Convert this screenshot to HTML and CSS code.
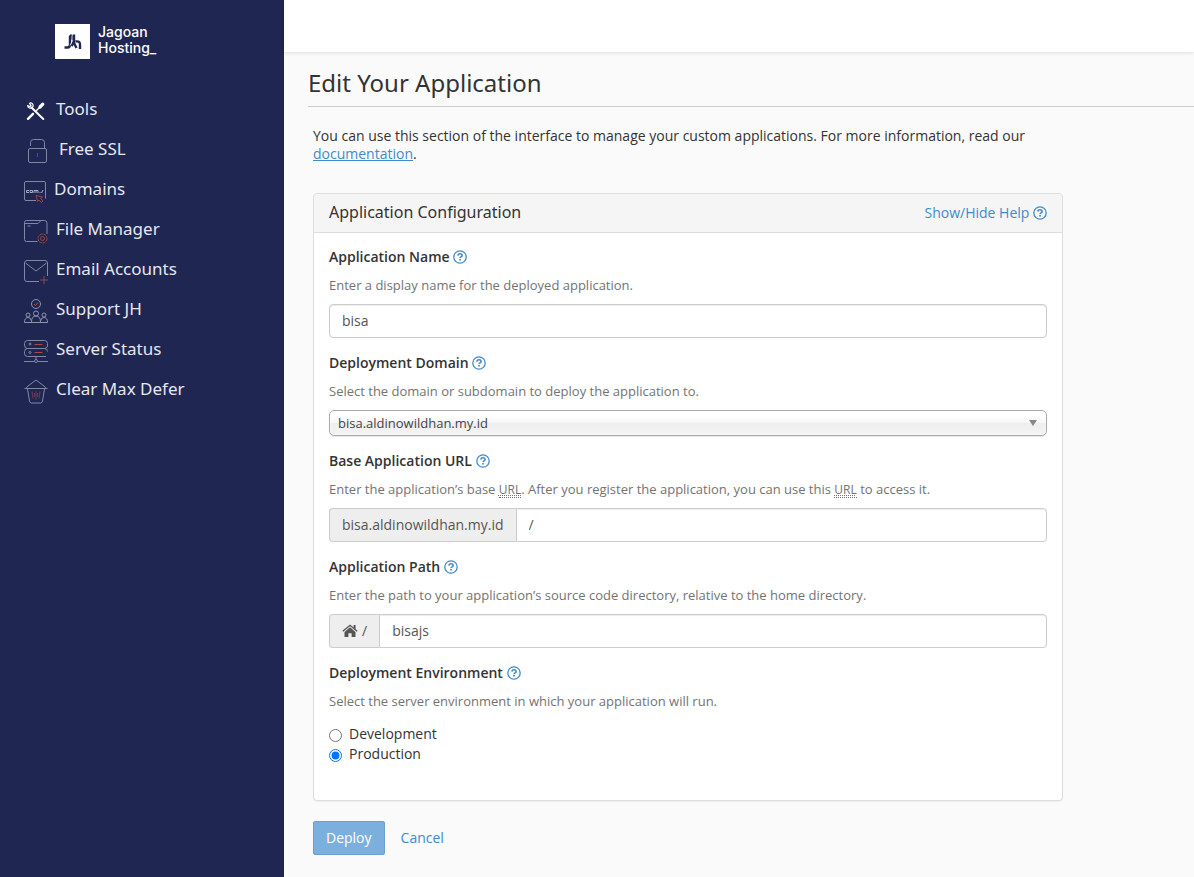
FILE: index.html
```html
<!DOCTYPE html>
<html lang="en">
<head>
    <meta charset="UTF-8">
    <meta name="viewport" content="width=device-width, initial-scale=1.0">
    <title>Edit Your Application</title>
    <link rel="stylesheet" href="styles.css">
</head>
<body>
    <svg class="sprite" aria-hidden="true">
        <symbol id="help" viewBox="0 0 14 14">
            <circle cx="7" cy="7" r="6.200" fill="none" stroke="currentColor" stroke-width="1.300"/>
            <path d="M4.900 5.600C5 4.300 5.900 3.700 7 3.700c1.200 0 2.100.7 2.100 1.700 0 1.500-2 1.500-2 2.700" fill="none" stroke="currentColor" stroke-width="1.600"/>
            <rect x="6.200" y="8.900" width="1.700" height="1.600" fill="currentColor"/>
        </symbol>
    </svg>

    <div class="sidebar">
        <a href="#" class="logo">
            <svg width="35" height="35" viewBox="0 0 35 35">
                <rect width="35" height="35" fill="#fff"/>
                <g fill="none" stroke="#202652" stroke-width="2.400">
                    <path d="M15 12v8.500q0 3-2.500 3H9.500"/>
                    <path d="M19 10.500V18l-2.500 4"/>
                    <path d="M18 17l3.500 7"/>
                    <path d="M20.500 17.500q4.500-.8 4.500 3V25"/>
                </g>
                <path d="M13.800 12l2.200-2 2 2 2-1.500v4l-2 2.500-2-2z" fill="#202652"/>
                <path d="M17 11.500v6l-2 4" fill="none" stroke="#fff" stroke-width=".8"/>
            </svg>
            <span>Jagoan<br>Hosting_</span>
        </a>
        <nav class="menu">
            <a href="#">
                <svg width="24" height="24" viewBox="0 0 24 24">
                    <g fill="none" stroke="#fff" stroke-linecap="round">
                        <path d="M7.500 8.500L19.300 20" stroke-width="2"/>
                        <path d="M4 19.800l5-5" stroke-width="2.400"/>
                        <path d="M12.500 11.500l4-4" stroke-width="1.400"/>
                        <path d="M16 8l2.800-2.800" stroke-width="3.200"/>
                        <path d="M5.500 4.200a2.600 2.600 0 0 1 2.800 4.300 2.800 2.800 0 0 1-4.600-1.800L6 7.500l1-1z" stroke-width="1.200"/>
                    </g>
                </svg>
                Tools
            </a>
            <a href="#" class="wide">
                <svg width="24" height="24" viewBox="0 0 24 24">
                    <g fill="none" stroke="#8286a3">
                        <rect x="1.500" y="9.500" width="18" height="14" rx="1.500"/>
                        <path d="M3.500 7V3.500Q3.500.5 6.500.5h8q3 0 3 3v6"/>
                        <path d="M10.500 14v4" stroke="#7a434f"/>
                    </g>
                </svg>
                Free SSL
            </a>
            <a href="#" class="narrow">
                <svg width="24" height="24" viewBox="0 0 24 24">
                    <g fill="none" stroke="#8286a3">
                        <path d="M12 21.500H2q-1.500 0-1.500-1.500V4q0-1.500 1.500-1.500h18q1.500 0 1.500 1.500v15.500"/>
                        <path d="M5 11.500H2.500v2H5M6 11.500h2.500v2H6zM10 14v-2.500h4V14M12 11.500V14M15.500 13.500h1M17.500 14l1.500-3" stroke="#a9acc0"/>
                        <path d="M12 16.500l6.500 1.500-2 1.500 2.500 2.500-1.500 1.500-2.500-2.500-1.500 1.500z" stroke="#8d4a4b"/>
                    </g>
                </svg>
                Domains
            </a>
            <a href="#">
                <svg width="24" height="24" viewBox="0 0 24 24">
                    <g fill="none" stroke="#8286a3">
                        <path d="M13.500 22.500H2.500q-2 0-2-2v-17q0-2 2-2h18q2.500 0 2.500 2.500v11"/>
                        <path d="M1 4.500h13l3-3M3.500 7h3"/>
                        <circle cx="18.500" cy="19.500" r="4.500" stroke="#8d4a4b" stroke-dasharray="3 .6"/>
                        <circle cx="18.500" cy="19.500" r="2" stroke="#8d4a4b"/>
                    </g>
                </svg>
                File Manager
            </a>
            <a href="#">
                <svg width="24" height="24" viewBox="0 0 24 24">
                    <g fill="none" stroke="#8286a3">
                        <path d="M15 22.500H3Q.5 22.500.5 20V4Q.5 1.500 3 1.500h18q2.500 0 2.500 2.500v13"/>
                        <path d="M1.500 4l10.500 8 10.500-8"/>
                        <path d="M16 21h8M20 17v8" stroke="#8d4a4b"/>
                    </g>
                </svg>
                Email Accounts
            </a>
            <a href="#">
                <svg width="24" height="24" viewBox="0 0 24 24">
                    <g fill="none" stroke="#8f93ae">
                        <circle cx="12" cy="5" r="4.500"/>
                        <circle cx="12" cy="14.500" r="2.500"/>
                        <circle cx="4" cy="16" r="2"/>
                        <circle cx="20" cy="16" r="2"/>
                        <path d="M.5 23.500h23M.5 23.500q0-5 3.500-5 3 0 3 3M7.500 23q0-6 4.500-6t4.500 6M17 21.500q0-3 3-3 3.500 0 3.500 5"/>
                        <path d="M10 5l1.500 1.500 2.500-3" stroke="#b0533f"/>
                    </g>
                </svg>
                Support JH
            </a>
            <a href="#">
                <svg width="24" height="24" viewBox="0 0 24 24">
                    <g fill="none" stroke="#8286a3">
                        <path d="M20 9.500H3.500Q.5 9.500.5 6V4.500q0-3 3-3h17q3 0 3 3V7q0 2-3 2.500"/>
                        <path d="M22 17.500H3.500q-3 0-3-3V12.500q0-3 3-3h17q3 0 3 3"/>
                        <circle cx="6" cy="5" r="1"/>
                        <circle cx="6" cy="13.500" r="1"/>
                        <circle cx="12" cy="22" r="1.500"/>
                        <path d="M12 17.500v3M0 22.500h10M14 22.500h10"/>
                        <path d="M10.500 5.500h8M10.500 13.500h8" stroke="#a04e3f"/>
                    </g>
                </svg>
                Server Status
            </a>
            <a href="#">
                <svg width="24" height="24" viewBox="0 0 24 24">
                    <g fill="none" stroke="#8286a3">
                        <path d="M.5 9.500h23M2.500 9.500q0-1.500 1.500-2.500L12 1l8 6q1.500 1 1.500 2.500"/>
                        <path d="M3.500 10l2 12q.3 2 2 2h9q1.700 0 2-2l2-12"/>
                        <path d="M8 12.500l1 7M12 12v9M16 12.500l-1 7M10.500 14v4M13.500 14v4" stroke="#7a434f" stroke-width=".8"/>
                    </g>
                </svg>
                Clear Max Defer
            </a>
        </nav>
    </div>

    <div class="main">
        <div class="topbar"></div>
        <div class="content">
            <h1>Edit Your Application</h1>
            <form class="page">
                <p class="intro">You can use this section of the interface to manage your custom applications. For more information, read our <a href="#">documentation</a>.</p>

                <div class="panel">
                    <div class="panel-header">
                        <h2>Application Configuration</h2>
                        <a href="#">Show/Hide Help <svg class="help-icon"><use href="#help"/></svg></a>
                    </div>
                    <div class="panel-body">
                        <div class="field">
                            <label for="name">Application Name <svg class="help-icon"><use href="#help"/></svg></label>
                            <p>Enter a display name for the deployed application.</p>
                            <input type="text" id="name" value="bisa">
                        </div>
                        <div class="field">
                            <label for="domain">Deployment Domain <svg class="help-icon"><use href="#help"/></svg></label>
                            <p>Select the domain or subdomain to deploy the application to.</p>
                            <div class="select">
                                <select id="domain">
                                    <option>bisa.aldinowildhan.my.id</option>
                                </select>
                            </div>
                        </div>
                        <div class="field">
                            <label for="url">Base Application URL <svg class="help-icon"><use href="#help"/></svg></label>
                            <p>Enter the application’s base <abbr title="Uniform Resource Locator">URL</abbr>. After you register the application, you can use this <abbr title="Uniform Resource Locator">URL</abbr> to access it.</p>
                            <div class="input-group">
                                <span class="addon">bisa.aldinowildhan.my.id</span>
                                <input type="text" id="url" value="/">
                            </div>
                        </div>
                        <div class="field">
                            <label for="path">Application Path <svg class="help-icon"><use href="#help"/></svg></label>
                            <p>Enter the path to your application’s source code directory, relative to the home directory.</p>
                            <div class="input-group">
                                <span class="addon">
                                    <svg width="16" height="14" viewBox="0 0 16 14" fill="#555">
                                        <path d="M8 3.300l5.500 4.600V13H9.600V9.200H6.400V13H2.500V7.900z"/>
                                        <path d="M.8 7.300L8 1.300l7.200 6" fill="none" stroke="#555" stroke-width="1.400"/>
                                        <path d="M11.600 1h2v4.500l-2-1.700z"/>
                                    </svg>
                                    /
                                </span>
                                <input type="text" id="path" value="bisajs">
                            </div>
                        </div>
                        <fieldset class="field">
                            <legend>Deployment Environment <svg class="help-icon"><use href="#help"/></svg></legend>
                            <p>Select the server environment in which your application will run.</p>
                            <div class="radios">
                                <label><input type="radio" name="env"> Development</label>
                                <label><input type="radio" name="env" checked> Production</label>
                            </div>
                        </fieldset>
                    </div>
                </div>

                <div class="actions">
                    <button type="button">Deploy</button>
                    <a href="#">Cancel</a>
                </div>
            </form>
        </div>
    </div>
</body>
</html>
```
FILE: styles.css
```css
* {
    box-sizing: border-box;
}
body {
    font-family: "Open Sans", "Noto Sans", sans-serif;
    font-size: 14px;
    line-height: 18px;
    color: #333;
    background-color: #fafafa;
    margin: 0;
    display: flex;
    min-height: 100vh;
}
a {
    color: #428bca;
    text-decoration: none;
}
.sprite {
    display: none;
}

/* sidebar */
.sidebar {
    width: 284px;
    flex-shrink: 0;
    background-color: #202652;
    padding-top: 24px;
}
.logo {
    display: flex;
    gap: 8px;
    height: 35px;
    padding-left: 55px;
    color: #fff;
    font-family: Inter, sans-serif;
    font-size: 14px;
    font-weight: 500;
    line-height: 16px;
}
.menu {
    margin-top: 30px;
}
.menu a {
    display: flex;
    gap: 8px;
    height: 40px;
    padding-left: 24px;
    align-items: center;
    color: #e6e7ee;
    font-family: "Noto Sans", sans-serif;
    font-size: 17px;
    line-height: 24px;
}
.menu a.wide {
    padding-left: 27px;
}
.menu a.narrow {
    gap: 6px;
}
.menu svg {
    margin-top: 4px;
    overflow: visible;
}

/* main */
.main {
    flex-grow: 1;
    min-width: 0;
}
.topbar {
    height: 52px;
    background-color: #fff;
    box-shadow: 0 1px 4px rgba(0, 0, 0, 0.12);
}
.content {
    padding: 14px 0 20px 24px;
}
h1, h2 {
    margin: 0;
    font-family: "Noto Sans", sans-serif;
    font-weight: 400;
}
h1 {
    padding-bottom: 7px;
    border-bottom: 1px solid #ccc;
    font-size: 24px;
    line-height: 33px;
}
.page {
    max-width: 755px;
    padding: 20px 0 0 5px;
}
.intro {
    margin: 0 0 30px;
}
.intro a {
    text-decoration: underline;
}
.panel {
    background-color: #fff;
    border: 1px solid #ddd;
    border-radius: 4px;
    box-shadow: 0 1px 1px rgba(0, 0, 0, 0.05);
}
.panel-header {
    display: flex;
    justify-content: space-between;
    align-items: center;
    height: 39px;
    padding: 0 15px;
    background-color: #f5f5f5;
    border-bottom: 1px solid #ddd;
    border-radius: 4px 4px 0 0;
}
.panel-header h2 {
    padding-bottom: 2px;
    font-size: 16px;
    line-height: 20px;
}
.panel-body {
    padding: 15px 15px 20px;
}
.help-icon {
    width: 14px;
    height: 14px;
    color: #428bca;
    vertical-align: -2px;
}

/* form */
.field {
    margin: 0 0 16px;
    padding: 0;
    border: 0;
}
.field > label, .field legend {
    display: block;
    padding: 0;
    font-weight: 600;
}
.field p {
    margin: 10px 0;
    color: #737373;
    font-size: 13px;
}
.field abbr {
    display: inline-block;
    font-size: 12px;
    line-height: 14px;
    text-decoration: underline dotted;
    border-bottom: 1px dotted #737373;
}
input[type="text"] {
    display: block;
    width: 100%;
    height: 34px;
    padding: 5px 12px 7px;
    border: 1px solid #ccc;
    border-radius: 4px;
    box-shadow: inset 0 1px 1px rgba(0, 0, 0, 0.075);
    background-color: #fff;
    color: #555;
    font: inherit;
}
.select {
    position: relative;
}
.select::after {
    content: "";
    position: absolute;
    right: 10px;
    top: 10px;
    border: 4px solid transparent;
    border-top: 6px solid #888;
    border-bottom: 0;
}
select {
    display: block;
    width: 100%;
    height: 26px;
    padding: 0 8px;
    appearance: none;
    border: 1px solid #aaa;
    border-radius: 5px;
    background: linear-gradient(#fff 20%, #f6f6f6 50%, #eee 52%, #f4f4f4 100%);
    box-shadow: 0 0 3px #fff inset, 0 1px 1px rgba(0, 0, 0, 0.1);
    color: #444;
    font-family: inherit;
    font-size: 13px;
}
.input-group {
    display: flex;
}
.addon {
    display: flex;
    align-items: center;
    gap: 4px;
    padding: 0 12px;
    border: 1px solid #ccc;
    border-right: 0;
    border-radius: 4px 0 0 4px;
    background-color: #eee;
    color: #555;
}
.input-group input[type="text"] {
    flex: 1;
    border-radius: 0 4px 4px 0;
}
.radios {
    padding-top: 4px;
}
.radios label {
    display: flex;
    gap: 7px;
    line-height: 20px;
}
.radios input {
    width: 13px;
    height: 13px;
    margin: 5px 0 0;
}

/* buttons */
.actions {
    display: flex;
    align-items: center;
    gap: 16px;
    margin-top: 20px;
}
button {
    height: 34px;
    padding: 0 12px;
    background-color: #7bafde;
    color: #fff;
    border: 1px solid #6a9fcf;
    border-radius: 2px;
    font: inherit;
    cursor: pointer;
}
```
